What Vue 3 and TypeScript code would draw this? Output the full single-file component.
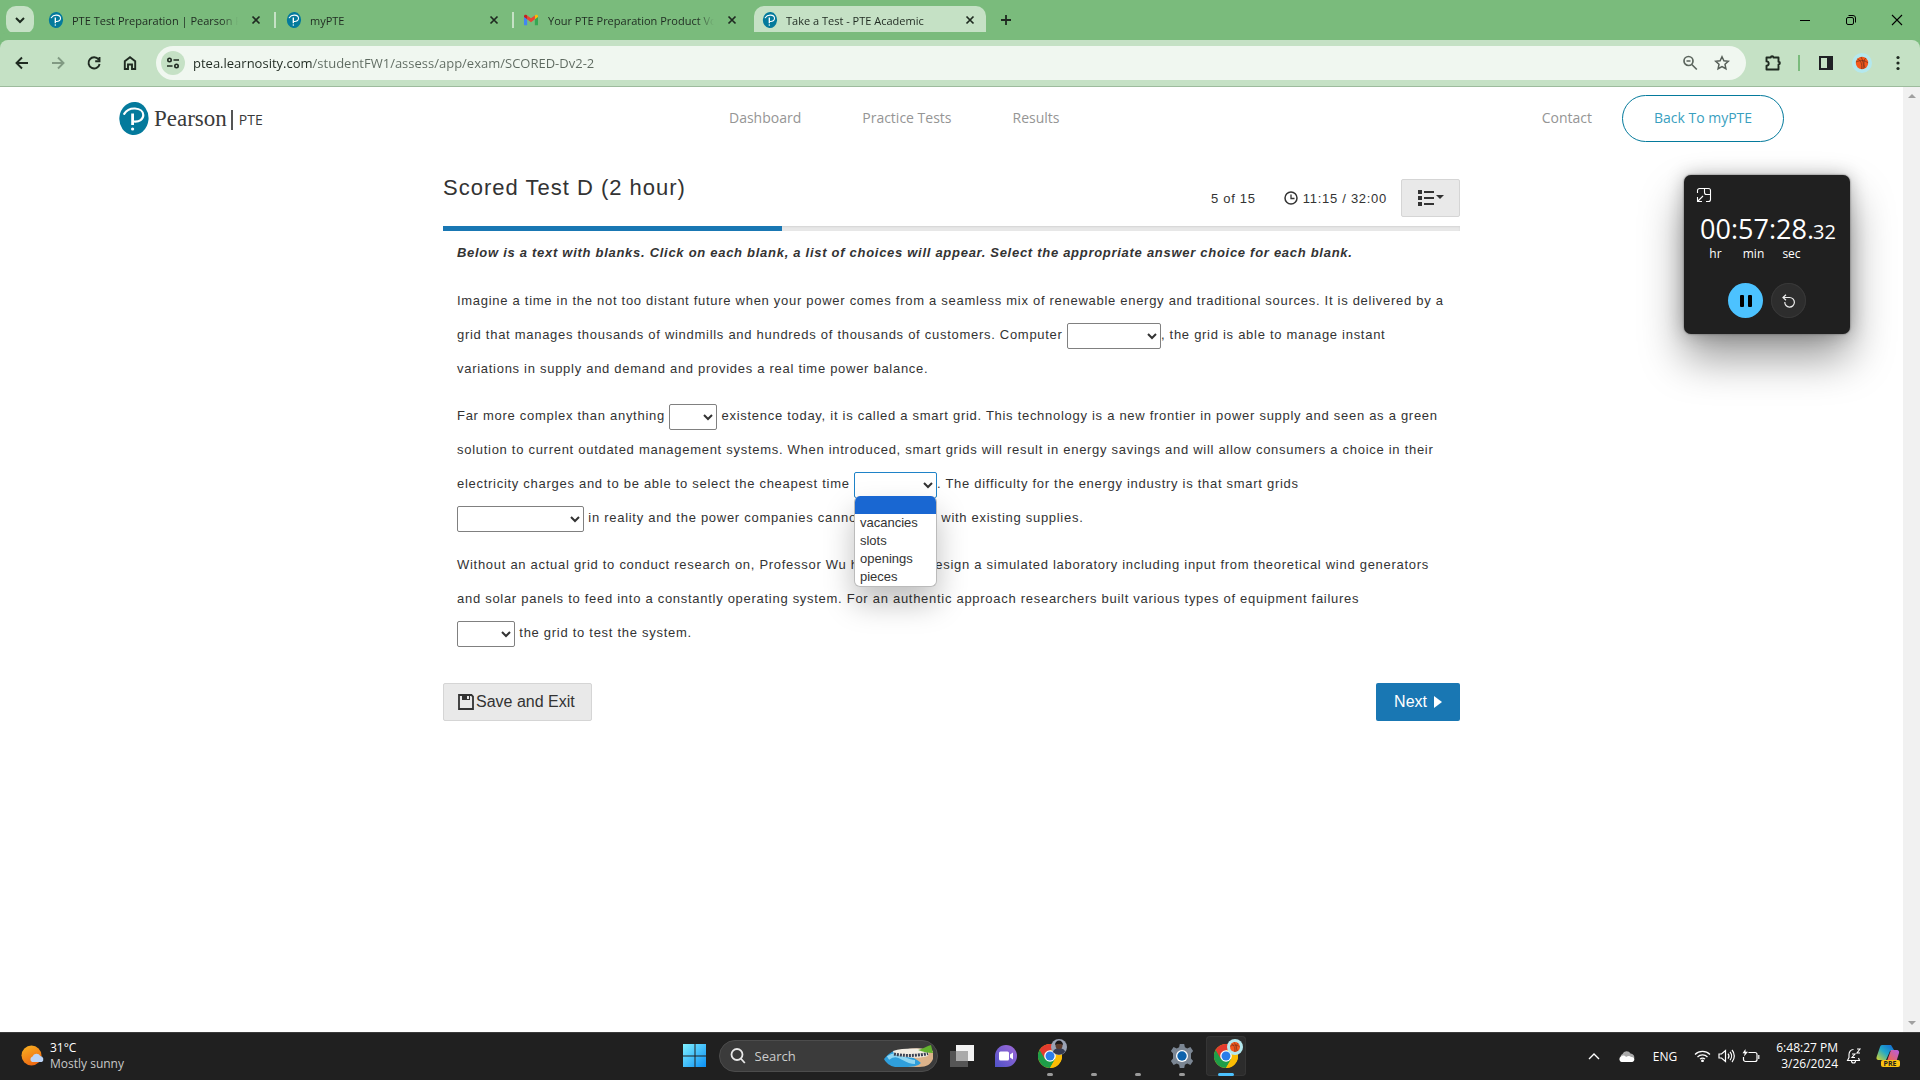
<script setup lang="ts">
import { ref } from 'vue'

interface Tab {
  title: string
  icon: 'pearson' | 'gmail'
  active?: boolean
}

const tabs: Tab[] = [
  { title: 'PTE Test Preparation | Pearson PTE', icon: 'pearson' },
  { title: 'myPTE', icon: 'pearson' },
  { title: 'Your PTE Preparation Product Voucher', icon: 'gmail' },
  { title: 'Take a Test - PTE Academic', icon: 'pearson', active: true },
]

const url = ref('ptea.learnosity.com/studentFW1/assess/app/exam/SCORED-Dv2-2')
const query = ref('')
const progress = 100 / 3
const choices = ['', 'vacancies', 'slots', 'openings', 'pieces']
const picked = ref('')
</script>

<template>
  <div class="desktop">
    <svg class="defs" aria-hidden="true">
      <symbol id="pearson" viewBox="0 0 30 33">
        <ellipse cx="15" cy="16.500" rx="14.600" ry="16.500" fill="#047a9c" transform="rotate(6 15 16)" />
        <path d="M5.200 11.800C8 7.500 12 6.300 16 6.500c5 .3 8.300 3 8.300 6.600 0 4.300-4 6.900-9.300 6.400" fill="none" stroke="#fff" stroke-width="2.200" stroke-linecap="round" />
        <path d="M13.600 11.500v11.500" stroke="#fff" stroke-width="2.800" fill="none" />
        <circle cx="13.600" cy="27" r="1.600" fill="#fff" />
      </symbol>
      <symbol id="gmail" viewBox="0 0 16 12">
        <path d="M0 2v9a1 1 0 0 0 1 1h2.600V4.500z" fill="#4285f4" />
        <path d="M12.400 12H15a1 1 0 0 0 1-1V2l-3.600 2.500z" fill="#34a853" />
        <path d="M12.400.8V5.200L16 2.600V1.600C16 0 14.300-.6 13.100.3z" fill="#fbbc04" />
        <path d="M3.600 5.200V.8L8 4.100 12.400.8v4.400L8 8.500z" fill="#ea4335" />
        <path d="M0 1.600v1l3.600 2.600V.8L2.900.3C1.700-.6 0 0 0 1.600z" fill="#c5221f" />
      </symbol>
      <symbol id="chrome" viewBox="0 0 24 24">
        <circle cx="12" cy="12" r="12" fill="#fbbc04" />
        <path d="M12 12L1.600 6A12 12 0 0 0 12 24l5.200-9z" fill="#1e9e48" />
        <path d="M1.600 6A12 12 0 0 1 22.400 6L12 6.500 7 15z" fill="#e33b2e" />
        <path d="M22.400 6H12v6l5.200 3L12 24A12 12 0 0 0 22.400 6z" fill="#fbbc04" />
        <circle cx="12" cy="12" r="5.800" fill="#fff" />
        <circle cx="12" cy="12" r="4.500" fill="#2b7de9" />
      </symbol>
      <symbol id="ball" viewBox="0 0 20 20">
        <circle cx="10" cy="10" r="10" fill="#b4e8ee" />
        <circle cx="10" cy="10" r="6.200" fill="#f4581c" />
        <path d="M4 9c4-2 9-2 12 1M9 4c2 3 3 8 2 12M5.500 6c3 1 5 5 4 10M14 5c-2 1-3 5-1 10" fill="none" stroke="#5b2a1a" stroke-width=".6" />
      </symbol>
    </svg>

    <header class="tabstrip">
      <button class="tab-search" aria-label="Search tabs">
        <svg width="12" height="12" viewBox="0 0 12 12"><path d="M2 4l4 4 4-4" fill="none" stroke="#1c2b1f" stroke-width="2" /></svg>
      </button>
      <div v-for="tab in tabs" :key="tab.title" class="tab" :class="{ active: tab.active }">
        <svg class="favicon" :class="tab.icon"><use :href="'#' + tab.icon" /></svg>
        <span class="tab-title">{{ tab.title }}</span>
        <button class="tab-close" aria-label="Close tab">
          <svg width="10" height="10" viewBox="0 0 10 10"><path d="M1.500 1.500l7 7M8.500 1.500l-7 7" stroke="#1f2a21" stroke-width="1.700" /></svg>
        </button>
      </div>
      <button class="new-tab" aria-label="New tab">
        <svg width="12" height="12" viewBox="0 0 12 12"><path d="M6 1v10M1 6h10" stroke="#1f2a21" stroke-width="1.800" /></svg>
      </button>
      <div class="window-controls">
        <button aria-label="Minimize"><svg width="12" height="12" viewBox="0 0 12 12"><path d="M1 6.500h10" stroke="#000" /></svg></button>
        <button aria-label="Restore">
          <svg width="12" height="12" viewBox="0 0 12 12" fill="none" stroke="#000"><rect x="1.500" y="3.500" width="7" height="7" rx="1.500" /><path d="M3.500 1.500H8a2.500 2.500 0 0 1 2.500 2.500v4.500" /></svg>
        </button>
        <button aria-label="Close"><svg width="12" height="12" viewBox="0 0 12 12"><path d="M1 1l10 10M11 1L1 11" stroke="#000" stroke-width="1.100" /></svg></button>
      </div>
    </header>

    <div class="toolbar">
      <div class="nav-buttons">
        <button aria-label="Back"><svg viewBox="0 0 16 16"><path d="M14 8H3M8 2.500L2.500 8 8 13.500" /></svg></button>
        <button class="dim" aria-label="Forward"><svg viewBox="0 0 16 16"><path d="M2 8h11M8 2.500L13.500 8 8 13.500" /></svg></button>
        <button aria-label="Reload"><svg viewBox="0 0 16 16"><path d="M12.600 4.500A5.600 5.600 0 1 0 13.600 9M13.500 2v4.200H9.200" /></svg></button>
        <button aria-label="Home"><svg viewBox="0 0 16 16"><path d="M2.800 14V6.200L8 2.200l5.200 4V14H10V9.500H6V14z" /></svg></button>
      </div>
      <div class="omnibox">
        <button class="site-info" aria-label="View site information">
          <svg width="14" height="12" viewBox="0 0 14 12" fill="none" stroke="#1f2a21" stroke-width="1.600"><circle cx="3.500" cy="3" r="1.700" /><path d="M7.500 3H13M1 9h5.500" /><circle cx="10.500" cy="9" r="1.700" /></svg>
        </button>
        <input v-model="url" class="url" aria-label="Address" />
        <button aria-label="Zoom">
          <svg width="16" height="16" viewBox="0 0 16 16" fill="none" stroke="#5c665e" stroke-width="1.700"><circle cx="6.500" cy="6" r="4.500" /><path d="M4.500 6h4M9.800 9.500l5 5" /></svg>
        </button>
        <button aria-label="Bookmark">
          <svg width="16" height="16" viewBox="0 0 16 16" fill="none" stroke="#565f58" stroke-width="1.500"><path d="M8 1.800l1.900 4 4.400.5-3.300 3 .9 4.400L8 11.500l-3.900 2.200.9-4.400-3.300-3 4.400-.5z" /></svg>
        </button>
      </div>
      <div class="extras">
        <button aria-label="Extensions">
          <svg width="18" height="18" viewBox="0 0 18 18"><path d="M2.500 3.500H6.800A1.300 1.300 0 0 1 9.400 3.500h5.100v4.200a1.300 1.300 0 0 1 0 2.800V15.500h-12V11.800a2.200 2.200 0 0 0 0-4.400z" fill="none" stroke="#1f2a21" stroke-width="1.900" stroke-linejoin="round" /></svg>
        </button>
        <span class="divider"></span>
        <button aria-label="Side panel">
          <svg width="16" height="16" viewBox="0 0 16 16"><rect x="2" y="2" width="12" height="12" fill="none" stroke="#1f2024" stroke-width="2" /><path d="M9 1h6v14H9z" fill="#1f2024" /></svg>
        </button>
        <button aria-label="Profile"><svg width="20" height="20"><use href="#ball" /></svg></button>
        <button aria-label="Menu">
          <svg width="4" height="16" viewBox="0 0 4 16" fill="#1f2a21"><circle cx="2" cy="2.500" r="1.600" /><circle cx="2" cy="8" r="1.600" /><circle cx="2" cy="13.500" r="1.600" /></svg>
        </button>
      </div>
    </div>

    <div class="viewport">
      <div class="page">
        <div class="site-header">
          <a class="brand" href="#">
            <svg class="brand-mark"><use href="#pearson" /></svg>
            <span class="brand-name">Pearson</span>
            <span class="brand-bar"></span>
            <span class="brand-sub">PTE</span>
          </a>
          <nav class="site-nav">
            <a href="#">Dashboard</a>
            <a href="#">Practice Tests</a>
            <a href="#">Results</a>
          </nav>
          <a class="contact" href="#">Contact</a>
          <button class="back">Back To myPTE</button>
        </div>

        <main class="test">
          <div class="test-head">
            <h1>Scored Test D (2 hour)</h1>
            <div class="status">
              <span>5 of 15</span>
              <span class="clock">
                <svg width="14" height="14" viewBox="0 0 14 14" fill="none" stroke="#333"><circle cx="7" cy="7" r="6" stroke-width="1.500" /><path d="M7 3.500V7.500h3.500" stroke-width="1.300" /></svg>
                11:15 / 32:00
              </span>
              <button class="outline" aria-label="Review list">
                <svg width="26" height="16" viewBox="0 0 26 16" fill="#333"><path d="M0 0h4v4H0zM0 6h4v4H0zM0 12h4v4H0zM6 1h10v2H6zM6 7h10v2H6zM6 13h10v2H6zM18 5h8l-4 4z" /></svg>
              </button>
            </div>
          </div>
          <div class="progress"><div class="fill" :style="{ width: progress + '%' }"></div></div>

          <div class="question">
            <p class="instruction">Below is a text with blanks. Click on each blank, a list of choices will appear. Select the appropriate answer choice for each blank.</p>
            <p>
              Imagine a time in the not too distant future when your power comes from a seamless mix of renewable energy and traditional sources. It is delivered by a grid that manages thousands of windmills and hundreds of thousands of customers. Computer <select class="w-94" aria-label="Blank 1"><option></option></select>, the grid is able to manage instant variations in supply and demand and provides a real time power balance.
            </p>
            <p>
              Far more complex than anything <select class="w-48" aria-label="Blank 2"><option></option></select> existence today, it is called a smart grid. This technology is a new frontier in power supply and seen as a green solution to current outdated management systems. When introduced, smart grids will result in energy savings and will allow consumers a choice in their electricity charges and to be able to select the cheapest time <span class="open-blank"><select v-model="picked" class="w-83 focused" aria-label="Blank 3"><option v-for="c in choices" :key="c">{{ c }}</option></select><span class="menu" role="listbox"><span v-for="c in choices" :key="c" class="choice" :class="{ chosen: c === picked }" role="option">{{ c }}</span></span></span>. The difficulty for the energy industry is that smart grids<br /><select class="w-127" aria-label="Blank 4"><option></option></select> in reality and the power companies cannot experiment with existing supplies.
            </p>
            <p>
              Without an actual grid to conduct research on, Professor Wu had to help design a simulated laboratory including input from theoretical wind generators and solar panels to feed into a constantly operating system. For an authentic approach researchers built various types of equipment failures<br /><select class="w-58" aria-label="Blank 5"><option></option></select> the grid to test the system.
            </p>
          </div>

          <div class="actions">
            <button class="save">
              <svg width="16" height="16" viewBox="0 0 16 16"><path d="M1 1h12.500L15 2.500V15H1z" fill="none" stroke="#333" stroke-width="1.800" /><path d="M4 1h8v5H4z" fill="#333" /><path d="M9 2h2v3H9z" fill="#e9e9e9" /></svg>
              Save and Exit
            </button>
            <button class="next">
              Next
              <svg width="8" height="12" viewBox="0 0 8 12"><path d="M0 0l8 6-8 6z" fill="#fff" /></svg>
            </button>
          </div>
        </main>
      </div>
      <div class="scrollbar" aria-hidden="true">
        <svg width="8" height="4" viewBox="0 0 8 4"><path d="M0 4l4-4 4 4z" fill="#a0a0a0" /></svg>
        <svg width="8" height="4" viewBox="0 0 8 4"><path d="M0 0h8L4 4z" fill="#a0a0a0" /></svg>
      </div>
    </div>

    <aside class="stopwatch">
      <button class="expand" aria-label="Back to full view">
        <svg width="16" height="16" viewBox="0 0 16 16" fill="none" stroke="#fff" stroke-width="1.100"><path d="M1.500 6V3.500a2 2 0 0 1 2-2h9a2 2 0 0 1 2 2v9a2 2 0 0 1-2 2H10M8.500 1.500v4a2 2 0 0 0 2 2h4M7 9l-5.500 5.500M1.500 10v4.500H6" /></svg>
      </button>
      <div class="digits">
        <div class="unit"><span>00</span><small>hr</small></div>
        <span class="colon">:</span>
        <div class="unit"><span>57</span><small>min</small></div>
        <span class="colon">:</span>
        <div class="unit"><span>28</span><small>sec</small></div>
        <span class="point">.</span>
        <span class="hundredths">32</span>
      </div>
      <div class="watch-actions">
        <button class="pause" aria-label="Pause"><svg width="12" height="12" viewBox="0 0 12 12"><rect width="4" height="12" rx="1" /><rect x="8" width="4" height="12" rx="1" /></svg></button>
        <button class="reset" aria-label="Reset">
          <svg width="14" height="14" viewBox="0 0 14 14" fill="none" stroke="#eee" stroke-width="1.200"><path d="M4 .8L1 3.500l3 2.700M1 3.500h6.500A4.800 4.800 0 1 1 2.800 8" /></svg>
        </button>
      </div>
    </aside>

    <footer class="taskbar">
      <div class="weather">
        <svg width="24" height="22" viewBox="0 0 24 22">
          <defs>
            <linearGradient id="sun" x1="0" y1="0" x2=".5" y2="1"><stop stop-color="#f9b522" /><stop offset="1" stop-color="#ee6a13" /></linearGradient>
          </defs>
          <circle cx="10.500" cy="10.500" r="10" fill="url(#sun)" />
          <path d="M11 17a3 3 0 0 1 .5-5.500 4.300 4.300 0 0 1 7.800-.5 3.200 3.200 0 0 1 1.400 6z" fill="#bcd4f7" />
        </svg>
        <div><strong>31°C</strong><span>Mostly sunny</span></div>
      </div>

      <div class="apps">
        <button class="app" aria-label="Start">
          <svg width="24" height="24" viewBox="0 0 24 24">
            <defs><linearGradient id="win" x1="0" y1="0" x2="1" y2="1"><stop stop-color="#7ff0ff" /><stop offset="1" stop-color="#0a8ff5" /></linearGradient></defs>
            <path d="M0 0h11.500v11.500H0zM12.500 0H23v11.500H12.500zM0 12.500h11.500V23H0zM12.500 12.500H23V23H12.500z" fill="url(#win)" />
          </svg>
        </button>
        <div class="search">
          <svg width="16" height="16" viewBox="0 0 16 16" fill="none" stroke="#e8e8e8" stroke-width="1.800"><circle cx="7" cy="6.500" r="5.500" /><path d="M10.800 10.500l4 4.500" /></svg>
          <input v-model="query" placeholder="Search" aria-label="Search" />
          <svg class="search-art" width="50" height="22" viewBox="0 0 50 22">
            <path d="M18 6C28 2 40 3 49 6v8c-2 5-6 8-14 8H14z" fill="#dcb38a" />
            <path d="M0 14c4-5 9-9 15-9 9 5 18 9 22 13-3 3-8 4-16 4H11C6 21 2 18 0 14z" fill="#2f9fdc" />
            <path d="M4 13c6-4 10-3 15 0s9 4 12 4" fill="none" stroke="#8fd6f2" stroke-width="4" />
            <path d="M9 6c10-3 24-3 36-1l-1 6c-10 3-23 2-34-2z" fill="#f1ece2" />
            <path d="M10 9c10 2 22 2 34-.5" fill="none" stroke="#3a4152" stroke-width="3" stroke-dasharray="2 1" />
            <path d="M34 5c5-1 9-4 13-5l2 8c-5 0-10-1-15-3z" fill="#63b22e" />
          </svg>
        </div>
        <button class="app" aria-label="Task view">
          <svg width="24" height="22" viewBox="0 0 24 22"><path d="M6 0h18v16H6z" fill="#f2f2f2" /><path d="M0 6h18v16H0z" fill="#555" /><path d="M6 6h12v10H6z" fill="#aaa" /></svg>
        </button>
        <button class="app" aria-label="Chat">
          <svg width="24" height="24" viewBox="0 0 24 24">
            <defs><linearGradient id="chat" x1="1" y1="0" x2="0" y2="1"><stop stop-color="#a06ad8" /><stop offset="1" stop-color="#4f52c8" /></linearGradient></defs>
            <path d="M12 1a11 11 0 1 1 0 22H1V12A11 11 0 0 1 12 1z" fill="url(#chat)" /><rect x="5" y="7.500" width="10" height="9" rx="1.500" fill="#fff" /><path d="M16 10.500l3-2v7l-3-2z" fill="#fff" />
          </svg>
        </button>
        <button class="app running" aria-label="Chrome">
          <svg width="24" height="24"><use href="#chrome" /></svg>
          <svg class="badge" width="16" height="16" viewBox="0 0 16 16"><circle cx="8" cy="8" r="8" fill="#9aa2b5" /><path d="M2 13c1-3 3-3 4-4h4c1 1 4 1 4 4a8 8 0 0 1-12 0z" fill="#343b52" /><circle cx="8" cy="6.500" r="3.500" fill="#5b3a2c" /><path d="M4 6c0-6 8-6 8 0l-2-1H6z" fill="#1b1718" /></svg>
        </button>
        <button class="app running" aria-label="Running app"></button>
        <button class="app running" aria-label="Running app"></button>
        <button class="app running" aria-label="Settings">
          <svg width="24" height="24" viewBox="0 0 24 24">
            <path d="M9.800 0h4.400l.7 3.300 2.300 1.100 3.200-1.300 2.700 3.800-2.100 2.500v5.200l2.100 2.500-2.700 3.800-3.200-1.300-2.300 1.100-.7 3.300H9.800l-.7-3.300-2.300-1.100-3.200 1.300L.9 17.100 3 14.600V9.400L.9 6.900l2.700-3.800 3.200 1.300 2.300-1.100z" fill="#7b8693" />
            <circle cx="12" cy="12" r="6" fill="#fff" /><circle cx="12" cy="12" r="4.700" fill="#0c62ac" />
          </svg>
        </button>
        <button class="app running current" aria-label="Chrome test window">
          <svg width="24" height="24"><use href="#chrome" /></svg>
          <svg class="badge" width="16" height="16"><use href="#ball" /></svg>
        </button>
      </div>

      <div class="tray">
        <button aria-label="Hidden icons"><svg width="12" height="8" viewBox="0 0 12 8"><path d="M1 7l5-5 5 5" fill="none" stroke="#fff" stroke-width="1.400" /></svg></button>
        <svg class="cloud" width="17" height="11" viewBox="0 0 17 11"><path d="M3 7a3 3 0 0 1 1.500-4A4.500 4.500 0 0 1 12.500 2.500 4 4 0 0 1 16 8z" fill="#aaa" /><path d="M3.500 11A3 3 0 0 1 3 5.500C5 4 7 4.500 8 6c2-1.500 4-1.500 5 0 4-.5 4.500 4.500 1 5z" fill="#fff" /></svg>
        <span class="lang">ENG</span>
        <svg width="17" height="12" viewBox="0 0 17 12" fill="none" stroke="#fff" stroke-width="1.200"><path d="M1 4.500a10.500 10.500 0 0 1 15 0M3.500 7a7 7 0 0 1 10 0M6 9.200a3.500 3.500 0 0 1 5 0" /><circle cx="8.500" cy="10.800" r=".8" fill="#fff" /></svg>
        <svg width="17" height="14" viewBox="0 0 17 14" fill="none" stroke="#fff" stroke-width="1.200"><path d="M1 5h2.500L7.500 1.500v11L3.500 9H1zM10 4.500a4 4 0 0 1 0 5M12 2.800a6.500 6.500 0 0 1 0 8.400M14 1a9 9 0 0 1 0 12" /></svg>
        <svg width="18" height="14" viewBox="0 0 18 14" fill="none" stroke="#fff" stroke-width="1.200"><path d="M6.500 3.500H13a2 2 0 0 1 2 2v5a2 2 0 0 1-2 2H3.500a2 2 0 0 1-2-2V8M16.800 6v4" /><path d="M3.500 0L.5 4.200h2.200L2 7.500l4-4.700H3.500z" fill="#fff" stroke="none" /></svg>
        <div class="datetime"><span>6:48:27 PM</span><span>3/26/2024</span></div>
        <svg width="16" height="16" viewBox="0 0 16 16" fill="none" stroke="#fff" stroke-width="1.100"><path d="M7.500 1.500C4.500 1.500 3 4 3 6.500v3l-1.500 3h12L12.500 10M5.500 13a2 2 0 0 0 4 0M6 6h3L6 9.500h3M11 1h3l-3 4h3" /></svg>
        <svg class="copilot" width="24" height="24" viewBox="0 0 24 24">
          <defs>
            <linearGradient id="cpa" x1="1" y1="0" x2="0" y2="1"><stop stop-color="#1265d4" /><stop offset=".5" stop-color="#22a9c9" /><stop offset="1" stop-color="#d8d52a" /></linearGradient>
            <linearGradient id="cpb" x1="1" y1="0" x2="0" y2="1"><stop stop-color="#b55be8" /><stop offset="1" stop-color="#f4683c" /></linearGradient>
          </defs>
          <path d="M6 1h9l3 5-4 1-4 9H2.500C1 16 0 15 .6 13L4 3c.4-1.300 1-2 2-2z" fill="url(#cpa)" />
          <path d="M15 6h6c1.500 0 2.500 1.500 2 3l-2.500 8H11z" fill="url(#cpb)" />
          <rect x="5" y="16" width="19" height="7" rx="2" fill="#fbc211" />
          <text x="14" y="22" text-anchor="middle" font-size="7" font-weight="700" fill="#222">PRE</text>
        </svg>
      </div>
    </footer>
  </div>
</template>

<style>
body {
  margin: 0;
}
</style>

<style scoped>
.desktop {
  display: flex;
  flex-direction: column;
  height: 100vh;
  overflow: hidden;
  position: relative;
  background: #fff;
  font-family: "Open Sans", "Noto Sans", sans-serif;
  font-size: 12px;
}
.defs {
  position: absolute;
  width: 0;
  height: 0;
}
button {
  border: 0;
  padding: 0;
  background: none;
  font: inherit;
  color: inherit;
  display: flex;
  align-items: center;
  justify-content: center;
}
a {
  text-decoration: none;
  color: inherit;
}

/* Tab strip */
.tabstrip {
  display: flex;
  align-items: stretch;
  flex: none;
  height: 40px;
  padding-left: 6px;
  background: #7abb7c;
}
.tab-search {
  width: 28px;
  height: 28px;
  margin: 6px 4px 0 0;
  border-radius: 10px;
  background: #c5e1c5;
}
.tab {
  position: relative;
  display: flex;
  align-items: center;
  width: 238px;
  box-sizing: border-box;
  padding: 0 10px;
  color: #1f2a21;
}
.tab:nth-of-type(-n + 2)::after {
  content: "";
  position: absolute;
  right: 0;
  top: 12px;
  width: 2px;
  height: 16px;
  background: #c5e1c5;
}
.favicon {
  flex: none;
  width: 16px;
  height: 16px;
}
.favicon.gmail {
  width: 14px;
  height: 12px;
  margin-right: 2px;
}
.tab-title {
  flex: 1;
  margin: 0 8px;
  overflow: hidden;
  white-space: nowrap;
  font-size: 11px;
  mask-image: linear-gradient(90deg, #000 90%, transparent);
}
.tab-close {
  width: 20px;
  height: 20px;
}
.tab.active {
  margin: 6px 0 0 2px;
  width: 232px;
  padding: 0 6px 6px 8px;
  border-radius: 10px 10px 0 0;
  background: #c5e1c5;
}
.tab.active::before,
.tab.active::after {
  content: "";
  position: absolute;
  bottom: 0;
  width: 10px;
  height: 10px;
}
.tab.active::before {
  left: -10px;
  background: radial-gradient(circle at 0 0, transparent 10px, #c5e1c5 10px);
}
.tab.active::after {
  right: -10px;
  background: radial-gradient(circle at 100% 0, transparent 10px, #c5e1c5 10px);
}
.new-tab {
  width: 28px;
  margin-left: 6px;
}
.window-controls {
  display: flex;
  margin-left: auto;
}
.window-controls button {
  width: 46px;
}

/* Toolbar */
.toolbar {
  display: flex;
  align-items: center;
  flex: none;
  height: 46px;
  padding: 0 4px;
  background: #c5e1c5;
  border-radius: 8px 8px 0 0;
  border-bottom: 1px solid #9dbb9d;
  box-shadow: 0 -8px 0 #7abb7c;
  position: relative;
}
.nav-buttons {
  display: flex;
  margin-right: 8px;
}
.nav-buttons button {
  width: 36px;
  height: 36px;
}
.nav-buttons svg {
  width: 16px;
  height: 16px;
  fill: none;
  stroke: #1f2a21;
  stroke-width: 1.9;
}
.nav-buttons .dim svg {
  stroke: #819a83;
}
.omnibox {
  display: flex;
  align-items: center;
  flex: 1;
  height: 34px;
  padding: 0 8px 0 5px;
  border-radius: 17px;
  background: #f0f7f0;
}
.omnibox button {
  width: 32px;
  height: 32px;
}
.omnibox .site-info {
  width: 24px;
  height: 24px;
  border-radius: 50%;
  background: #c5e1c5;
}
.url {
  flex: 1;
  margin-left: 8px;
  border: 0;
  padding: 0;
  outline: 0;
  font-family: inherit;
  font-size: 13px;
  color: transparent;
  background: linear-gradient(90deg, #1f2a21 120px, #5e6a60 120px);
  background-clip: text;
}
.extras {
  display: flex;
  align-items: center;
  margin-left: 9px;
}
.extras button {
  width: 36px;
  height: 36px;
}
.divider {
  width: 2px;
  height: 16px;
  margin: 0 8px 0 7px;
  background: #7abb7c;
}

/* Page */
.viewport {
  display: flex;
  flex: 1;
  min-height: 0;
}
.page {
  flex: 1;
  min-width: 0;
}
.scrollbar {
  display: flex;
  flex-direction: column;
  align-items: center;
  justify-content: space-between;
  width: 17px;
  padding: 7px 0;
  box-sizing: border-box;
  background: #f1f1f1;
}
.site-header {
  display: flex;
  align-items: center;
  margin: 8px 119px 0;
  height: 47px;
  font-size: 14px;
  color: #959595;
}
.brand {
  display: flex;
  align-items: center;
  color: #3a3a3a;
}
.brand-mark {
  width: 30px;
  height: 33px;
}
.brand-name {
  margin-left: 5px;
  font-family: "Liberation Serif", serif;
  font-size: 23px;
}
.brand-bar {
  width: 2px;
  height: 20px;
  margin: 2px 6px 0 4px;
  background: #555;
}
.brand-sub {
  font-size: 14px;
  font-weight: 500;
  margin-top: 2px;
}
.site-nav {
  display: flex;
  flex: 1;
  justify-content: center;
  gap: 61px;
  padding: 0 16px 2px 0;
}
.contact {
  margin-right: 30px;
  padding-bottom: 2px;
}
.back {
  width: 162px;
  height: 47px;
  padding-bottom: 2px;
  border: 1px solid #047a9c;
  border-radius: 24px;
  color: #3a9fbf;
  font-weight: 500;
}

/* Test */
.test {
  max-width: 1017px;
  margin: 32px auto 0;
  font-family: "Liberation Sans", Arial, sans-serif;
  color: #333;
}
.test-head {
  display: flex;
  justify-content: space-between;
  align-items: flex-start;
  height: 52px;
}
h1 {
  margin: 0;
  font-size: 22px;
  line-height: 28px;
  font-weight: 400;
  letter-spacing: 1px;
}
.status {
  display: flex;
  align-items: center;
  margin-top: 5px;
  letter-spacing: 0.055em;
  font-size: 13px;
}
.clock {
  display: flex;
  align-items: center;
  gap: 5px;
  margin: 0 14px 0 28px;
}
.outline {
  width: 59px;
  height: 38px;
  border: 1px solid #d5d5d5;
  border-radius: 2px;
  background: #e9e9e9;
}
.progress {
  height: 5px;
  background: #e8e8e8;
  box-shadow: inset 0 1px 2px #d4d4d4;
}
.fill {
  height: 5px;
  background: #1977b3;
}
.question {
  padding: 12px 14px 0;
  font-size: 13px;
  line-height: 34px;
  letter-spacing: 0.055em;
}
.question p {
  margin: 0 0 13px;
}
.question .instruction {
  margin-bottom: 21px;
  line-height: 20px;
  font-weight: 700;
  font-style: italic;
}
select {
  height: 26px;
  box-sizing: border-box;
  vertical-align: middle;
  border: 1px solid #808080;
  border-radius: 2px;
  background-color: #fff;
  color: #333;
  font-family: inherit;
  font-size: 12px;
}
select.focused {
  border-color: #1f83c8;
}
.w-48 {
  width: 48px;
}
.w-58 {
  width: 58px;
}
.w-83 {
  width: 83px;
}
.w-94 {
  width: 94px;
}
.w-127 {
  width: 127px;
}
.open-blank {
  position: relative;
}
.menu {
  position: absolute;
  top: 100%;
  left: 0;
  z-index: 2;
  width: 83px;
  margin-top: 5px;
  box-sizing: border-box;
  overflow: hidden;
  border: 1px solid #bbb;
  border-top: 0;
  border-radius: 6px;
  background: #fff;
  box-shadow: 0 16px 30px rgba(0, 0, 0, 0.25);
  line-height: 18px;
  letter-spacing: 0;
}
.choice {
  display: block;
  height: 18px;
  padding-left: 5px;
}
.choice.chosen {
  background: #1967d2;
}
.actions {
  display: flex;
  justify-content: space-between;
  margin-top: 33px;
}
.save,
.next {
  height: 38px;
  box-sizing: border-box;
  border-radius: 2px;
  font-size: 16px;
}
.save {
  gap: 2px;
  padding: 0 16px 0 14px;
  border: 1px solid #d5d5d5;
  background: #e9e9e9;
}
.next {
  gap: 7px;
  padding: 0 18px;
  background: #1977b3;
  color: #fff;
}

/* Stopwatch window */
.stopwatch {
  position: absolute;
  top: 175px;
  right: 70px;
  width: 166px;
  height: 159px;
  box-sizing: border-box;
  padding: 12px;
  border-radius: 7px;
  background: #202020;
  box-shadow: 0 0 2px #555, 0 24px 44px rgba(0, 0, 0, 0.4), 0 0 18px rgba(0, 0, 0, 0.25);
  color: #fff;
}
.expand {
  width: 16px;
  height: 16px;
}
.digits {
  display: flex;
  margin: 8px 0 0 4px;
  font-size: 27px;
  line-height: 36px;
}
.unit {
  display: flex;
  flex-direction: column;
  align-items: center;
  width: 31px;
}
.unit small {
  font-size: 12px;
  line-height: 14px;
}
.colon {
  width: 7px;
  text-align: center;
}
.point {
  width: 6px;
}
.hundredths {
  font-size: 20px;
  line-height: 41px;
}
.watch-actions {
  display: flex;
  justify-content: center;
  gap: 8px;
  margin-top: 22px;
}
.watch-actions button {
  width: 35px;
  height: 35px;
  border-radius: 50%;
}
.pause {
  background: #4cc2ff;
}
.reset {
  background: #2d2d2d;
  box-shadow: inset 0 0 0 1px #383838;
}

/* Taskbar */
.taskbar {
  display: grid;
  grid-template-columns: 1fr auto 1fr;
  align-items: center;
  flex: none;
  height: 48px;
  box-sizing: border-box;
  padding-bottom: 1px;
  border-top: 1px solid #3a3a3a;
  background: #202020;
  color: #fff;
}
.weather {
  display: flex;
  align-items: center;
  gap: 5px;
  padding-left: 21px;
}
.weather div {
  display: flex;
  flex-direction: column;
  line-height: 16px;
}
.weather strong {
  font-weight: 500;
}
.weather span {
  color: #c8c8c8;
}
.apps {
  display: flex;
  align-items: center;
  gap: 4px;
}
.app {
  position: relative;
  width: 40px;
  height: 40px;
  border-radius: 4px;
}
.running::after {
  content: "";
  position: absolute;
  bottom: 0;
  left: 17px;
  width: 6px;
  height: 3px;
  border-radius: 2px;
  background: #9a9a9a;
}
.current {
  background: #2c2c2c;
  box-shadow: inset 0 0 0 1px #353535;
}
.current::after {
  left: 12px;
  width: 16px;
  background: #4cc2ff;
}
.badge {
  position: absolute;
  top: 3px;
  right: 3px;
}
.search {
  display: flex;
  align-items: center;
  width: 219px;
  height: 32px;
  box-sizing: border-box;
  padding: 0 3px 0 10px;
  border: 1px solid #4c4c4c;
  border-radius: 16px;
  background: #3b3b3b;
}
.search input {
  flex: 1;
  min-width: 0;
  margin-left: 9px;
  padding: 0;
  border: 0;
  outline: 0;
  background: none;
  font-family: inherit;
  font-size: 13px;
  color: #fff;
}
.search input::placeholder {
  color: #ccc;
}
.tray {
  display: flex;
  align-items: center;
  justify-content: flex-end;
  padding-right: 20px;
}
.cloud {
  margin: 0 18px;
}
.lang {
  margin-right: 17px;
}
.tray > svg + svg {
  margin-left: 7px;
}
.datetime {
  display: flex;
  flex-direction: column;
  align-items: flex-end;
  margin: 0 8px 0 16px;
  line-height: 16px;
}
.tray > .copilot.copilot {
  margin-left: 14px;
}
</style>
